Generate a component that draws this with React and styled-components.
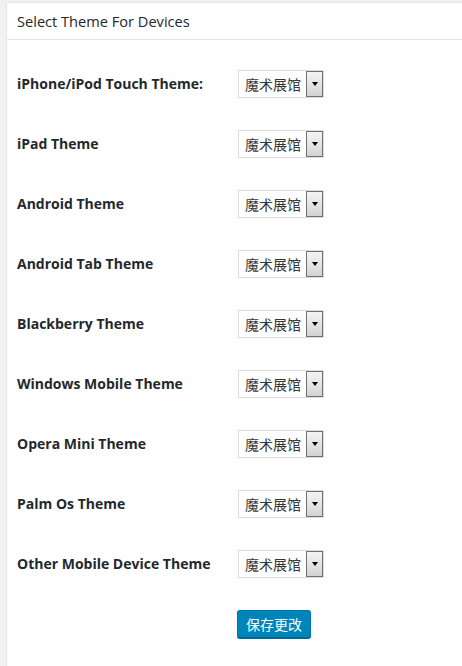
import styled, { createGlobalStyle } from "styled-components";

const devices = [
  "iPhone/iPod Touch Theme:",
  "iPad Theme",
  "Android Theme",
  "Android Tab Theme",
  "Blackberry Theme",
  "Windows Mobile Theme",
  "Opera Mini Theme",
  "Palm Os Theme",
  "Other Mobile Device Theme",
];

const GlobalStyle = createGlobalStyle`
  html, body {
    margin: 0;
    padding: 0;
    background: #f1f1f1;
  }
  body {
    font-family: "Open Sans", "Noto Sans CJK SC", sans-serif;
    color: #23282d;
  }
`;

function ThemeSelect() {
  return (
    <SelectBox>
      <SelectText>魔术展馆</SelectText>
      <ArrowButton>
        <Arrow />
      </ArrowButton>
    </SelectBox>
  );
}

export default function App() {
  return (
    <>
      <GlobalStyle />
      <Panel>
        <PanelHeader>Select Theme For Devices</PanelHeader>
        <PanelBody>
          <SettingsTable>
            {devices.map((name) => (
              <Row key={name}>
                <Label>{name}</Label>
                <ThemeSelect />
              </Row>
            ))}
          </SettingsTable>
          <Submit>
            <SaveButton type="button">保存更改</SaveButton>
          </Submit>
        </PanelBody>
      </Panel>
    </>
  );
}

const Panel = styled.div`
  margin: 2px 0 0 6px;
  height: calc(100vh - 2px);
  background: #fff;
  border: 1px solid #e5e5e5;
  border-right: none;
  border-bottom: none;
  box-sizing: border-box;
  overflow: hidden;
`;

const PanelHeader = styled.h3`
  margin: 0;
  padding: 0 10px;
  height: 36px;
  display: flex;
  align-items: center;
  font-size: 14.6px;
  font-weight: 400;
  color: #23282d;
  border-bottom: 1px solid #e5e5e5;
`;

const PanelBody = styled.div`
  padding: 14px 10px 0;
`;

const SettingsTable = styled.div`
  display: grid;
  grid-template-columns: 221px auto;
`;

const Row = styled.div`
  display: contents;
`;

const Label = styled.div`
  height: 60px;
  box-sizing: border-box;
  padding-bottom: 2px;
  display: flex;
  align-items: center;
  font-size: 14px;
  font-weight: 700;
  color: #23282d;
`;

const SelectBox = styled.div`
  align-self: center;
  justify-self: start;
  width: 86px;
  height: 28px;
  box-sizing: border-box;
  border: 1px solid #ddd;
  background: #fff;
  display: flex;
  align-items: stretch;
  font-family: "Noto Sans CJK SC", sans-serif;
`;

const SelectText = styled.span`
  flex: 1;
  display: flex;
  align-items: center;
  padding-left: 6px;
  font-size: 14px;
  color: #32373c;
`;

const ArrowButton = styled.span`
  width: 17px;
  box-sizing: border-box;
  border: 1px solid #707070;
  background: linear-gradient(180deg, #f4f4f4 0%, #e4e4e4 50%, #d2d2d2 100%);
  display: flex;
  align-items: center;
  justify-content: center;
`;

const Arrow = styled.span`
  width: 0;
  height: 0;
  border-left: 3.5px solid transparent;
  border-right: 3.5px solid transparent;
  border-top: 4px solid #000;
`;

const Submit = styled.div`
  padding: 16px 0 0 220px;
`;

const SaveButton = styled.button`
  height: 28px;
  padding: 0 8px;
  font-family: "Noto Sans CJK SC", sans-serif;
  font-size: 14px;
  color: #fff;
  background: #0085ba;
  border: 1px solid #0073aa;
  border-bottom-color: #006799;
  border-radius: 3px;
  box-shadow: 0 1px 0 #006799;
  cursor: pointer;
`;
